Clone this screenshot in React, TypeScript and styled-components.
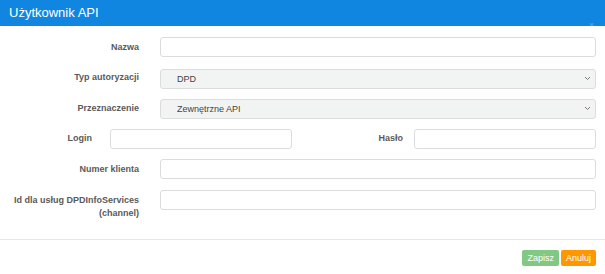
import React from 'react'
import styled, {createGlobalStyle} from 'styled-components'

const GlobalStyle = createGlobalStyle`
  html, body {
    margin: 0;
    padding: 0;
    background: #fff;
    font-family: "Liberation Sans", Arial, sans-serif;
  }
`

const Header = styled.div`
  position: relative;
  height: 26px;
  background: #1186e1;
  color: #fff;
  font-size: 13px;
  line-height: 26px;
  padding-left: 9px;
`

const Close = styled.span`
  position: absolute;
  right: 11px;
  bottom: -3px;
  font-size: 8px;
  line-height: 8px;
  color: #fff;
  opacity: 0.35;
`

const Form = styled.div`
  display: flex;
  flex-direction: column;
  gap: 10.6px;
  padding: 11px 9px 0 0;
  height: 202px;
  box-sizing: border-box;
`

const Row = styled.div<{top?: boolean}>`
  display: grid;
  grid-template-columns: 160px 1fr;
  align-items: ${p => (p.top ? 'start' : 'center')};
`

const SplitRow = styled.div`
  display: grid;
  grid-template-columns: 110px 182px 122px 182px;
  align-items: center;
`

const Label = styled.label<{pad?: number; top?: boolean}>`
  text-align: right;
  padding-right: ${p => p.pad ?? 21}px;
  padding-top: ${p => (p.top ? 4 : 0)}px;
  font-size: 9px;
  font-weight: bold;
  line-height: 13px;
  color: #5a5a5a;
`

const Input = styled.input`
  box-sizing: border-box;
  height: 20px;
  width: 100%;
  border: 1px solid #dcdcdc;
  border-radius: 3px;
  background: #fff;
  outline: none;
`

const SelectWrap = styled.div`
  position: relative;
  height: 20px;
`

const Select = styled.select`
  appearance: none;
  box-sizing: border-box;
  width: 100%;
  height: 20px;
  border: 1px solid #dcdcdc;
  border-radius: 3px;
  background: #f2f3f3;
  padding: 0 0 0 16px;
  font-family: "Liberation Sans", Arial, sans-serif;
  font-size: 9px;
  color: #444;
  outline: none;
`

const Chevron = styled.svg`
  position: absolute;
  right: 5px;
  top: 8px;
  pointer-events: none;
`

const Footer = styled.div`
  border-top: 1px solid #e6e6e6;
  margin-top: 11px;
  display: flex;
  justify-content: flex-end;
  gap: 2px;
  padding: 10px 9px 0 0;
`

const Button = styled.button<{color: string}>`
  height: 16px;
  padding: 0 5px;
  border: none;
  border-radius: 2px;
  background: ${p => p.color};
  color: #fff;
  font-family: "Liberation Sans", Arial, sans-serif;
  font-size: 9px;
  line-height: 16px;
`

function Dropdown({value}: {value: string}) {
    return (
        <SelectWrap>
            <Select defaultValue={value}>
                <option>{value}</option>
            </Select>
            <Chevron width="7" height="5" viewBox="0 0 7 5">
                <path d="M1 1 L3.5 3.5 L6 1" fill="none" stroke="#777" strokeWidth="1"/>
            </Chevron>
        </SelectWrap>
    )
}

export default function App() {
    return (
        <>
            <GlobalStyle/>
            <Header>
                Użytkownik API
                <Close>×</Close>
            </Header>
            <Form>
                <Row>
                    <Label>Nazwa</Label>
                    <Input/>
                </Row>
                <Row>
                    <Label>Typ autoryzacji</Label>
                    <Dropdown value="DPD"/>
                </Row>
                <Row>
                    <Label>Przeznaczenie</Label>
                    <Dropdown value="Zewnętrzne API"/>
                </Row>
                <SplitRow>
                    <Label pad={18}>Login</Label>
                    <Input/>
                    <Label pad={11}>Hasło</Label>
                    <Input type="password"/>
                </SplitRow>
                <Row>
                    <Label>Numer klienta</Label>
                    <Input/>
                </Row>
                <Row top>
                    <Label top>Id dla usług DPDInfoServices (channel)</Label>
                    <Input/>
                </Row>
            </Form>
            <Footer>
                <Button color="#80c883">Zapisz</Button>
                <Button color="#ff9800">Anuluj</Button>
            </Footer>
        </>
    )
}
